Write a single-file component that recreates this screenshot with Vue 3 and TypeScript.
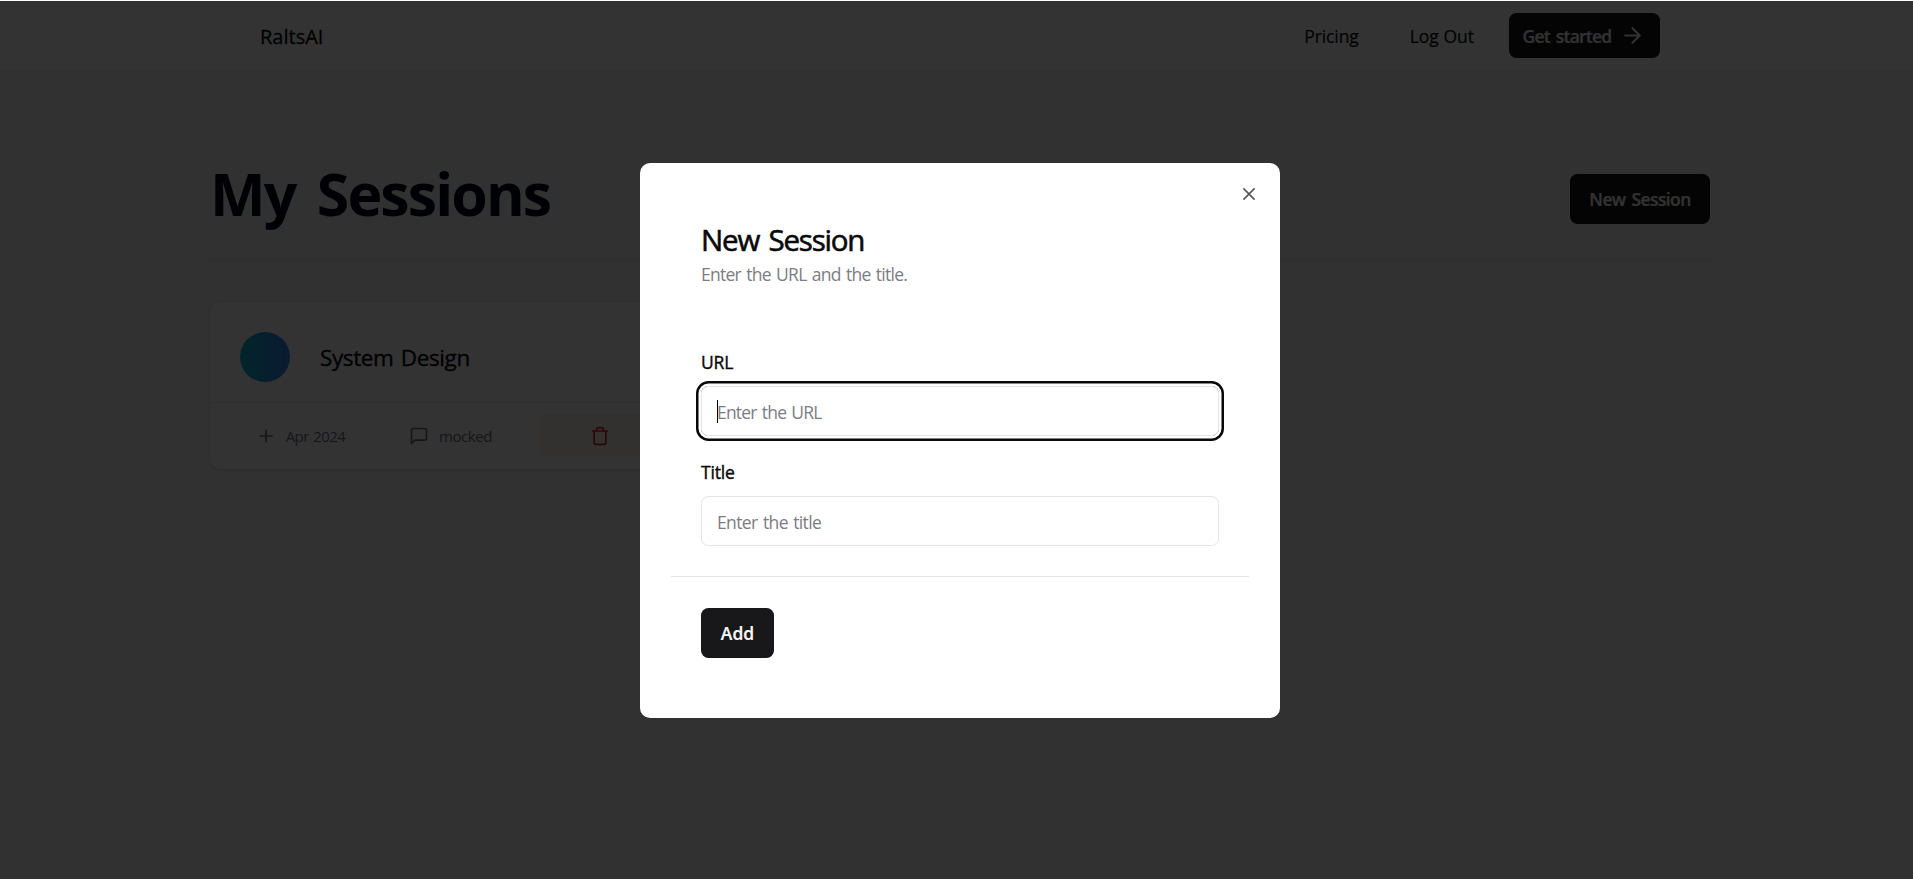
<script setup lang="ts">
import { ref } from 'vue'

interface Field {
  id: string
  label: string
  placeholder: string
  active: boolean
}

const fields: Field[] = [
  { id: 'url', label: 'URL', placeholder: 'Enter the URL', active: true },
  { id: 'title', label: 'Title', placeholder: 'Enter the title', active: false },
]
const values = ref<Record<string, string>>({ url: '', title: '' })
const session = { name: 'System Design', date: 'Apr 2024', status: 'mocked' }
</script>

<template>
  <div class="viewport">
    <div class="page">
      <header class="nav">
        <a class="brand">RaltsAI</a>
        <nav class="links">
          <a class="link pricing">Pricing</a>
          <a class="link logout">Log Out</a>
          <a class="btn start">
            <span>Get started</span>
            <svg class="icon" viewBox="0 0 24 24"><path d="M5 12h14M12 5l7 7-7 7" /></svg>
          </a>
        </nav>
      </header>

      <main class="main">
        <div class="heading">
          <h1>My Sessions</h1>
          <button class="btn new" type="button">New Session</button>
        </div>
        <div class="grid">
          <article class="card">
            <div class="card-top">
              <span class="avatar"></span>
              <h3>{{ session.name }}</h3>
            </div>
            <div class="card-bottom">
              <span class="meta date">
                <svg class="icon" viewBox="0 0 24 24"><path d="M5 12h14M12 5v14" /></svg>
                <span>{{ session.date }}</span>
              </span>
              <span class="meta status">
                <svg class="icon" viewBox="0 0 24 24"><path d="M21 15a2 2 0 0 1-2 2H7l-4 4V5a2 2 0 0 1 2-2h14a2 2 0 0 1 2 2z" /></svg>
                <span>{{ session.status }}</span>
              </span>
              <button class="trash" type="button" aria-label="Delete">
                <svg class="icon" viewBox="0 0 24 24"><path d="M3 6h18M19 6v14a2 2 0 0 1-2 2H7a2 2 0 0 1-2-2V6M8 6V4a2 2 0 0 1 2-2h4a2 2 0 0 1 2 2v2" /></svg>
              </button>
            </div>
          </article>
        </div>
      </main>

      <div class="overlay">
        <section class="dialog" role="dialog">
          <svg class="close" viewBox="0 0 15 15"><path d="M3.3 3.3l8.4 8.4M11.7 3.3l-8.4 8.4" /></svg>
          <h2>New Session</h2>
          <p class="hint">Enter the URL and the title.</p>
          <form class="form" @submit.prevent>
            <div v-for="f in fields" :key="f.id" class="field">
              <label :for="f.id">{{ f.label }}</label>
              <div class="control" :class="{ active: f.active }">
                <input :id="f.id" v-model="values[f.id]" :class="f.id" :placeholder="f.placeholder" autocomplete="off" />
                <span v-if="f.active" class="caret"></span>
              </div>
            </div>
            <div class="rule"></div>
            <button class="btn add" type="submit">Add</button>
          </form>
        </section>
      </div>
    </div>
    <div class="topline"></div>
  </div>
</template>

<style>
html,
body {
  margin: 0;
  overflow: hidden;
  background: #303030;
}
</style>

<style scoped>
* {
  box-sizing: border-box;
}
.viewport {
  position: relative;
  width: 100vw;
  height: 100vh;
  overflow: hidden;
  font-family: 'Segoe UI', 'Open Sans', 'Noto Sans', sans-serif;
  font-size: 17.5px;
  line-height: 25px;
  color: #09090b;
}
.page {
  position: relative;
  width: 1920px;
  height: 881px;
  background: #f3f3f3;
}
.topline {
  position: absolute;
  inset: 0 0 auto;
  height: 1px;
  background: #fff;
}
.icon {
  width: 20px;
  height: 20px;
  flex: none;
  fill: none;
  stroke: currentColor;
  stroke-width: 2;
  stroke-linecap: round;
  stroke-linejoin: round;
}
h1,
h2,
h3,
p {
  margin: 0;
}
.btn {
  display: flex;
  align-items: center;
  justify-content: center;
  padding: 0;
  border: 0;
  border-radius: 7.5px;
  background: #18181b;
  color: #fafafa;
  font: 600 17.5px/25px 'Segoe UI', 'Open Sans', sans-serif;
}
.nav {
  display: flex;
  align-items: center;
  justify-content: space-between;
  height: 71px;
  padding: 0 260px;
  background: #fcfcfc;
  border-bottom: 1px solid #e4e4e7;
}
.brand {
  font-size: 20px;
  padding-top: 3px;
  -webkit-text-stroke: 0.3px currentColor;
}
.links {
  display: flex;
  align-items: center;
}
.link {
  padding-top: 3px;
  -webkit-text-stroke: 0.15px currentColor;
}
.pricing {
  letter-spacing: -0.1px;
  margin-right: 51px;
}
.logout {
  margin-right: 35px;
}
.start {
  width: 151px;
  height: 45px;
  padding-right: 2px;
  gap: 8px;
  letter-spacing: -0.75px;
  word-spacing: 2px;
  -webkit-text-stroke: 0.2px currentColor;
}
.start span {
  padding-top: 2px;
}
.start .icon {
  width: 25px;
  height: 25px;
}
.main {
  width: 1500px;
  margin: 0 auto;
}
.heading {
  display: flex;
  justify-content: space-between;
  height: 190px;
  border-bottom: 1px solid #e4e4e7;
}
h1 {
  margin-top: 85px;
  font-size: 59px;
  line-height: 75px;
  font-weight: 700;
  letter-spacing: -1.9px;
  word-spacing: 8px;
  color: #020617;
}
.new {
  width: 140px;
  height: 50px;
  margin-top: 103px;
  padding-top: 1px;
  letter-spacing: -0.6px;
  word-spacing: 2px;
  -webkit-text-stroke: 0.2px currentColor;
}
.grid {
  display: grid;
  grid-template-columns: repeat(3, 1fr);
  gap: 30px;
  margin-top: 41px;
}
.card {
  height: 167px;
  border-radius: 10px;
  background: #fff;
  box-shadow: 0 1px 4px rgba(0, 0, 0, 0.12);
}
.card-top {
  display: flex;
  align-items: center;
  gap: 30px;
  height: 101px;
  padding: 10px 30px 0;
  border-bottom: 1px solid #e8e8ea;
}
.avatar {
  width: 50px;
  height: 50px;
  border-radius: 50%;
  background: linear-gradient(90deg, #06b6d4, #3b82f6);
}
h3 {
  padding-top: 2px;
  font-size: 22.5px;
  line-height: 30px;
  font-weight: 400;
  letter-spacing: -0.4px;
  word-spacing: 2px;
  -webkit-text-stroke: 0.35px currentColor;
}
.card-bottom {
  display: grid;
  grid-template-columns: repeat(3, 1fr);
  gap: 30px;
  align-items: center;
  padding: 10px 30px 0;
}
.meta {
  display: flex;
  align-items: center;
  justify-content: center;
  gap: 10px;
  height: 45px;
  padding-left: 1px;
  font-size: 15px;
  color: #71717a;
}
.date {
  letter-spacing: -0.55px;
  word-spacing: 1px;
}
.status {
  letter-spacing: -0.4px;
}
.meta span {
  padding-top: 1px;
}
.trash {
  display: flex;
  align-items: center;
  justify-content: center;
  height: 43px;
  padding: 0;
  border: 0;
  border-radius: 5px;
  background: #ffeded;
  color: #dc2626;
}
.overlay {
  position: absolute;
  inset: 0;
  display: flex;
  align-items: center;
  justify-content: center;
  background: rgba(0, 0, 0, 0.8);
}
.dialog {
  position: relative;
  width: 640px;
  height: 555px;
  padding: 61px 61px 0;
  border-radius: 10px;
  background: #fff;
}
.close {
  position: absolute;
  top: 21px;
  right: 21px;
  width: 20px;
  height: 20px;
  fill: none;
  stroke: #55555a;
  stroke-width: 1.2;
}
h2 {
  font-size: 29.5px;
  line-height: 32px;
  font-weight: 400;
  letter-spacing: -1.2px;
  word-spacing: 3px;
  -webkit-text-stroke: 0.6px currentColor;
}
.hint {
  margin-top: 6px;
  letter-spacing: -0.73px;
  word-spacing: 1.4px;
  color: #7c7c84;
}
.form {
  padding-top: 63px;
}
.field {
  height: 110px;
}
label {
  display: block;
  height: 36px;
  letter-spacing: -0.2px;
  -webkit-text-stroke: 0.4px currentColor;
}
.control {
  position: relative;
  height: 50px;
  border-radius: 7.5px;
}
.active {
  box-shadow: 0 0 0 2.5px #fff, 0 0 0 5px #09090b;
}
input {
  display: block;
  width: 100%;
  height: 50px;
  padding: 1px 15px 0;
  border: 1px solid #e4e4e7;
  border-radius: 7.5px;
  outline: none;
  background: transparent;
  font: 17.5px/25px 'Segoe UI', 'Open Sans', sans-serif;
  color: #09090b;
}
.url {
  letter-spacing: -0.8px;
  word-spacing: 1.4px;
}
.title {
  letter-spacing: -0.62px;
  word-spacing: 1.4px;
}
input::placeholder {
  color: #7c7c84;
  opacity: 1;
}
.caret {
  position: absolute;
  left: 16px;
  top: 14px;
  width: 1px;
  height: 23px;
  background: #000;
}
.rule {
  height: 1px;
  margin: 6px -30px 31px;
  background: #e4e4e7;
}
.add {
  width: 73px;
  height: 50px;
  padding-top: 1px;
  -webkit-text-stroke: 0.2px currentColor;
}
</style>
